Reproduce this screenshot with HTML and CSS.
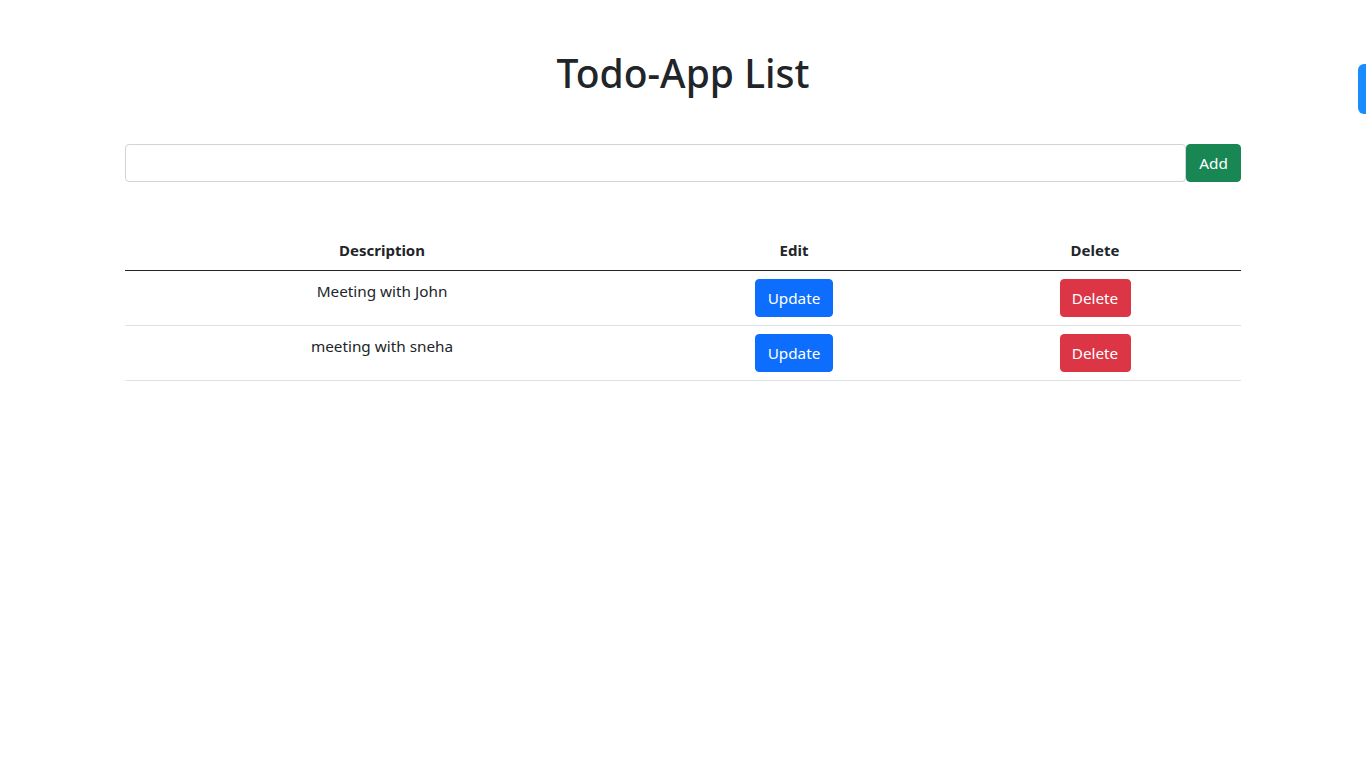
FILE: index.html
```html
<!DOCTYPE html>
<html lang="en">
<head>
<meta charset="utf-8">
<title>Todo-App List</title>
<link rel="stylesheet" href="styles.css">
</head>
<body>
<div class="container">
  <h1 class="title">Todo-App List</h1>
  <form class="add-form">
    <input class="add-input" type="text">
    <button class="btn btn-green" type="button">Add</button>
  </form>
  <table class="todo-table">
    <colgroup>
      <col class="col-desc">
      <col class="col-edit">
      <col class="col-del">
    </colgroup>
    <thead>
      <tr><th>Description</th><th>Edit</th><th>Delete</th></tr>
    </thead>
    <tbody>
      <tr>
        <td>Meeting with John</td>
        <td><button class="btn btn-blue" type="button">Update</button></td>
        <td><button class="btn btn-red" type="button">Delete</button></td>
      </tr>
      <tr>
        <td>meeting with sneha</td>
        <td><button class="btn btn-blue" type="button">Update</button></td>
        <td><button class="btn btn-red" type="button">Delete</button></td>
      </tr>
    </tbody>
  </table>
</div>
<div class="side-tab"></div>
</body>
</html>
```
FILE: styles.css
```css
html, body {
  margin: 0;
  padding: 0;
  background: #fff;
}
body {
  font-family: "Noto Sans", "Open Sans", "Liberation Sans", sans-serif;
  font-size: 15.3px;
  line-height: 24px;
  color: #212529;
}
.container {
  width: 1116px;
  margin: 0 auto;
  padding-top: 49px;
}
.title {
  margin: 0;
  text-align: center;
  font-size: 39px;
  font-weight: 500;
  line-height: 48px;
}
.add-form {
  display: flex;
  margin: 47px 0 0;
}
.add-input {
  flex: 1;
  height: 38px;
  box-sizing: border-box;
  border: 1px solid #ced4da;
  border-radius: 4px;
  padding: 6px 12px;
  font: inherit;
  outline: none;
}
.btn {
  box-sizing: border-box;
  height: 38px;
  padding: 6px 0;
  border: 1px solid transparent;
  border-radius: 4px;
  font-family: inherit;
  font-size: 15.3px;
  line-height: 24px;
  color: #fff;
  cursor: pointer;
}
.btn-green { background: #198754; border-color: #198754; width: 55px; }
.btn-blue { background: #0d6efd; border-color: #0d6efd; width: 78px; }
.btn-red { background: #dc3545; border-color: #dc3545; width: 71px; }
.todo-table {
  width: 100%;
  margin-top: 48px;
  border-collapse: collapse;
}
.col-desc { width: 514px; }
.col-edit { width: 310px; }
.col-del { width: 292px; }
.todo-table th,
.todo-table td {
  padding: 8px;
  text-align: center;
  vertical-align: top;
  border-bottom: 1px solid #dee2e6;
}
.todo-table th {
  font-size: 15px;
  font-weight: 700;
  border-bottom: 1px solid #212529;
}
.side-tab {
  position: fixed;
  right: 0;
  top: 64px;
  width: 8px;
  height: 50px;
  background: #1a8cff;
  border-radius: 6px 0 0 6px;
}
```
